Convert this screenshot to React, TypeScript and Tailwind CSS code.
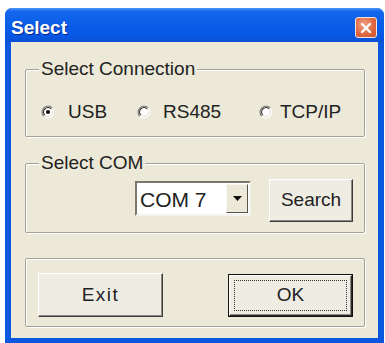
import React from "react";

function Radio({ checked }: { checked?: boolean }) {
  return (
    <svg width="14" height="14" viewBox="0 0 14 14" className="shrink-0">
      <circle cx="7" cy="7" r="6" fill="#ffffff" />
      <path d="M11.24 2.76 A6 6 0 0 0 2.76 11.24" stroke="#8a8a84" strokeWidth="1.4" fill="none" />
      <path d="M10.18 3.82 A4.5 4.5 0 0 0 3.82 10.18" stroke="#333" strokeWidth="1.2" fill="none" />
      <path d="M11.24 2.76 A6 6 0 0 1 2.76 11.24" stroke="#ffffff" strokeWidth="1" fill="none" />
      <path d="M10.18 3.82 A4.5 4.5 0 0 1 3.82 10.18" stroke="#dcd9cc" strokeWidth="1" fill="none" />
      {checked && <circle cx="7" cy="7" r="2.1" fill="#111" />}
    </svg>
  );
}

function Btn({ children, className }: { children: React.ReactNode; className?: string }) {
  return (
    <div
      className={
        "flex items-center justify-center bg-[#efede3] border border-t-white border-l-white border-r-[#3c3c3c] border-b-[#3c3c3c] shadow-[inset_-1px_-1px_0_#8c8a80] text-[19px] text-[#222] " +
        (className ?? "")
      }
    >
      {children}
    </div>
  );
}

export default function App() {
  return (
    <div className="w-[385px] h-[343px] bg-white overflow-hidden font-['Liberation_Sans',Arial,sans-serif]">
      <div className="ml-[5px] mt-[8px] w-[379px] h-[335px] flex flex-col rounded-t-[7px] bg-[#0b57de] overflow-hidden">
        {/* title bar */}
        <div className="h-[34px] shrink-0 flex items-start bg-[linear-gradient(180deg,#4a94f7_0%,#1466ec_10%,#0a5de8_50%,#0656e2_85%,#0a50d4_100%)]">
          <div className="ml-[6px] mt-[9px] text-[19px] leading-[22px] font-bold text-white [text-shadow:1px_1px_0_#0a2a8a]">
            Select
          </div>
          <div className="ml-auto mr-[7px] mt-[9px] w-[22px] h-[21px] rounded-[3px] border border-[#f4e6dc] bg-[radial-gradient(circle_at_40%_35%,#f2a184_0%,#e06a42_55%,#c9502a_100%)] flex items-center justify-center">
            <svg width="12" height="12" viewBox="0 0 12 12">
              <path d="M2 2 L10 10 M10 2 L2 10" stroke="#ffffff" strokeWidth="2.4" strokeLinecap="round" />
            </svg>
          </div>
        </div>
        {/* client */}
        <div className="flex-1 mx-[6px] mb-[5px] bg-[#ece9d8] flex flex-col pl-[14px] pr-[13px] pt-[27px] text-[#222]">
          {/* group 1 */}
          <div className="relative h-[68px] rounded-[2px] border border-[#a4a294] shadow-[inset_1px_1px_0_#ffffff,1px_1px_0_#ffffff]">
            <span className="absolute left-[13px] -top-[12px] px-[2px] bg-[#ece9d8] text-[19px] leading-[22px]">
              Select Connection
            </span>
            <div className="mt-[31px] pl-[15px] h-[22px] flex items-center text-[19px] leading-[22px]">
              <div className="w-[96px] flex items-center gap-[13px]">
                <Radio checked />
                <span>USB</span>
              </div>
              <div className="w-[121px] flex items-center gap-[12px]">
                <Radio />
                <span>RS485</span>
              </div>
              <div className="flex items-center gap-[7px] ml-[1px]">
                <Radio />
                <span>TCP/IP</span>
              </div>
            </div>
          </div>
          {/* group 2 */}
          <div className="relative mt-[26px] h-[70px] rounded-[2px] border border-[#a4a294] shadow-[inset_1px_1px_0_#ffffff,1px_1px_0_#ffffff] flex items-start pt-[15px] pl-[109px]">
            <span className="absolute left-[13px] -top-[12px] px-[2px] bg-[#ece9d8] text-[19px] leading-[22px]">
              Select COM
            </span>
            <div className="mt-[2px] w-[116px] h-[35px] flex bg-white border-2 border-t-[#7a786e] border-l-[#7a786e] border-r-[#f4f3ee] border-b-[#f4f3ee]">
              <div className="flex-1 pl-[3px] pt-[5px] text-[21px] leading-[24px] text-[#222]">COM 7</div>
              <div className="w-[22px] my-[1px] mr-[1px] bg-[#ece9d8] border border-t-[#f6f5ef] border-l-[#f6f5ef] border-r-[#55544c] border-b-[#55544c] flex items-center justify-center">
                <svg width="9" height="5" viewBox="0 0 9 5">
                  <path d="M0 0 H9 L4.5 5 Z" fill="#111" />
                </svg>
              </div>
            </div>
            <Btn className="ml-[18px] w-[84px] h-[43px]">Search</Btn>
          </div>
          {/* group 3 */}
          <div className="mt-[25px] h-[69px] rounded-[2px] border border-[#a4a294] shadow-[inset_1px_1px_0_#ffffff,1px_1px_0_#ffffff] flex items-start pt-[14px] pl-[12px]">
            <Btn className="w-[125px] h-[44px] tracking-[1.5px]">Exit</Btn>
            <div className="ml-[65px] mt-[1px] w-[125px] h-[43px] border border-[#111] flex">
              <div className="flex-1 flex bg-[#efede3] border border-t-white border-l-white border-r-[#2a2a2a] border-b-[#2a2a2a] shadow-[inset_-1px_-1px_0_#8c8a80] p-[4px]">
                <div className="flex-1 border border-dotted border-[#333] flex items-center justify-center text-[19px] text-[#222]">
                  OK
                </div>
              </div>
            </div>
          </div>
        </div>
      </div>
    </div>
  );
}
